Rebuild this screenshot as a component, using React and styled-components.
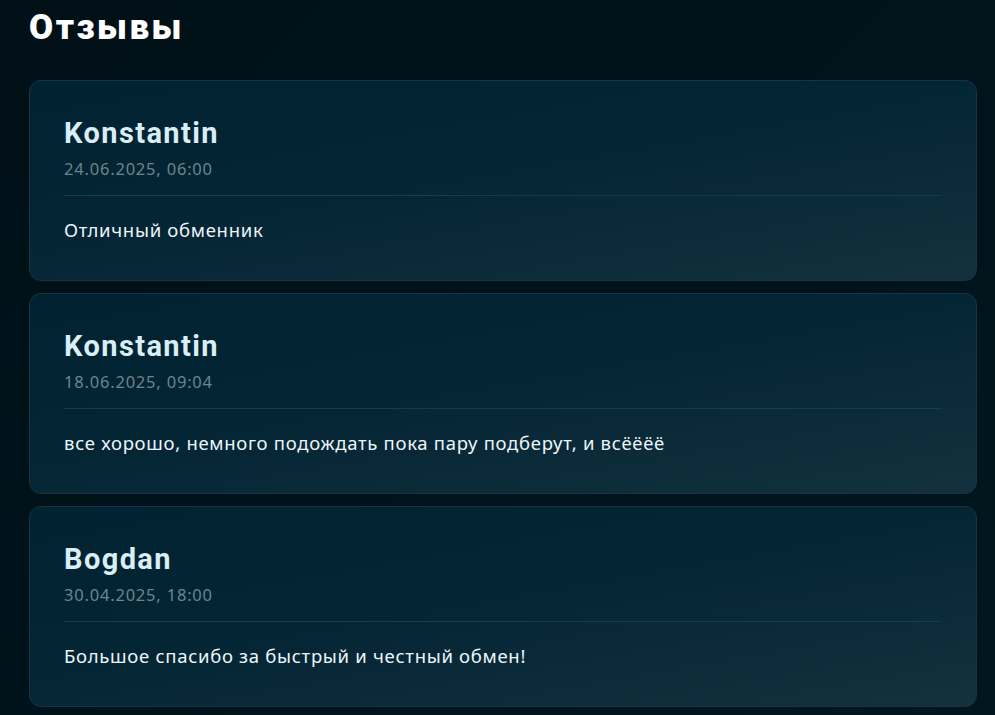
import React from "react";
import styled, { createGlobalStyle } from "styled-components";

const GlobalStyle = createGlobalStyle`
  html, body {
    margin: 0;
    padding: 0;
    background-color: #01141b;
  }
  body {
    font-family: "Noto Sans", "Open Sans", sans-serif;
    color: #e8f4f8;
  }
  * {
    box-sizing: border-box;
  }
`;

const Page = styled.div`
  min-height: 715px;
  padding: 6px 18px 8px 29px;
  background: linear-gradient(135deg, #011017 0%, #01161e 100%);
`;

const Title = styled.h1`
  margin: 0 0 30px;
  font-family: Roboto, "Liberation Sans", sans-serif;
  font-weight: 900;
  font-size: 35px;
  line-height: 44px;
  letter-spacing: 2.5px;
  color: #ffffff;
`;

const List = styled.div`
  display: flex;
  flex-direction: column;
  gap: 12px;
`;

const Card = styled.article`
  height: 201px;
  padding: 34px 34px 0;
  border: 1px solid #163444;
  border-radius: 12px;
  background: linear-gradient(170deg, #012230 0%, #042534 45%, #13313f 100%);
`;

const Name = styled.h2`
  margin: 0;
  font-family: Roboto, "Liberation Sans", sans-serif;
  font-weight: 700;
  font-size: 29px;
  line-height: 36px;
  letter-spacing: 1.4px;
  color: #d9eef6;
`;

const Date = styled.div`
  margin-top: 7px;
  font-size: 16.5px;
  line-height: 22px;
  letter-spacing: 0.8px;
  color: #6c858f;
`;

const Divider = styled.hr`
  margin: 15px 0 0;
  border: 0;
  border-top: 1px solid #193c4a;
`;

const Text = styled.p`
  margin: 22px 0 0;
  font-size: 18.5px;
  line-height: 24px;
  letter-spacing: 0.7px;
  color: #ecf6fa;
`;

const reviews = [
  { name: "Konstantin", date: "24.06.2025, 06:00", text: "Отличный обменник" },
  {
    name: "Konstantin",
    date: "18.06.2025, 09:04",
    text: "все хорошо, немного подождать пока пару подберут, и всёёёё",
  },
  { name: "Bogdan", date: "30.04.2025, 18:00", text: "Большое спасибо за быстрый и честный обмен!" },
];

export default function App() {
  return (
    <>
      <GlobalStyle />
      <Page>
        <Title>Отзывы</Title>
        <List>
          {reviews.map((r, i) => (
            <Card key={i}>
              <Name>{r.name}</Name>
              <Date>{r.date}</Date>
              <Divider />
              <Text>{r.text}</Text>
            </Card>
          ))}
        </List>
      </Page>
    </>
  );
}
